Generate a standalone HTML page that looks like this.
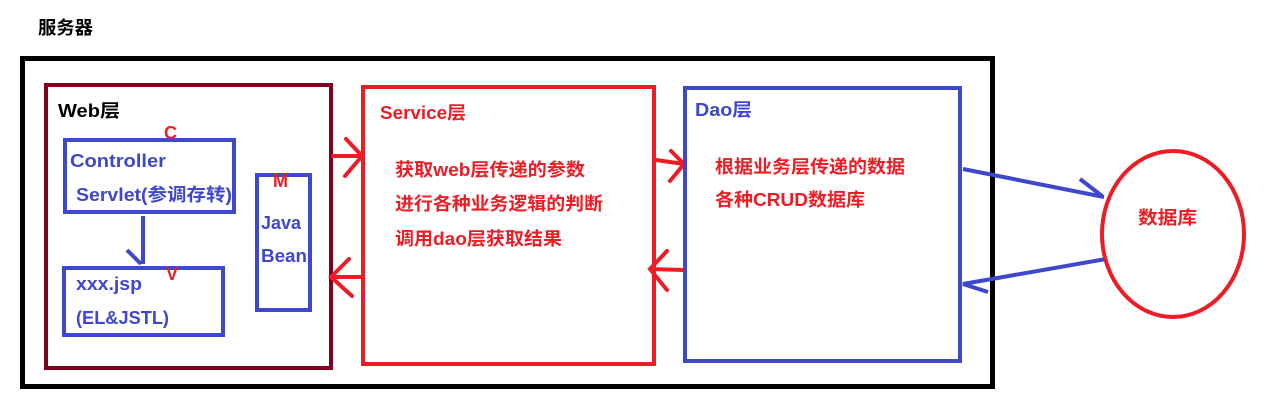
<!DOCTYPE html>
<html><head><meta charset="utf-8"><style>
html,body{margin:0;padding:0;background:#fff;width:1266px;height:414px;overflow:hidden}
svg text{font-family:"Liberation Sans","Noto Sans CJK SC",sans-serif;font-weight:bold;font-size:18px}
</style></head><body>
<svg width="1266" height="414" xmlns="http://www.w3.org/2000/svg">
<text x="38" y="34" fill="#000" font-size="18" textLength="55" lengthAdjust="spacingAndGlyphs">服务器</text>
<rect x="22.5" y="58.5" width="970" height="328" fill="none" stroke="#000" stroke-width="5"/>
<rect x="46" y="85" width="285" height="283" fill="none" stroke="#800020" stroke-width="4"/>
<text x="58" y="117" fill="#000" textLength="62" lengthAdjust="spacingAndGlyphs">Web层</text>
<rect x="65" y="140" width="169" height="72" fill="none" stroke="#3f48cc" stroke-width="4"/>
<text x="70" y="167" fill="#3f48cc" textLength="96" lengthAdjust="spacingAndGlyphs">Controller</text>
<text x="76" y="201" fill="#3f48cc" textLength="156" lengthAdjust="spacingAndGlyphs">Servlet(参调存转)</text>
<text x="164" y="139" fill="#ee1c24">C</text>
<line x1="143" y1="216" x2="143" y2="264" stroke="#3f48cc" stroke-width="4"/>
<line x1="127" y1="250" x2="141" y2="264" stroke="#3f48cc" stroke-width="4"/>
<rect x="64" y="268" width="159" height="67" fill="none" stroke="#3f48cc" stroke-width="4"/>
<text x="76" y="290" fill="#3f48cc" textLength="66" lengthAdjust="spacingAndGlyphs">xxx.jsp</text>
<text x="76" y="324" fill="#3f48cc" textLength="93" lengthAdjust="spacingAndGlyphs">(EL&amp;JSTL)</text>
<text x="166" y="280" fill="#ee1c24">V</text>
<rect x="257" y="175" width="53" height="135" fill="none" stroke="#3f48cc" stroke-width="4"/>
<text x="261" y="229" fill="#3f48cc" textLength="40" lengthAdjust="spacingAndGlyphs">Java</text>
<text x="261" y="262" fill="#3f48cc" textLength="46" lengthAdjust="spacingAndGlyphs">Bean</text>
<text x="273" y="187" fill="#ee1c24">M</text>
<rect x="363" y="87" width="291" height="277" fill="none" stroke="#ee1c24" stroke-width="4"/>
<text x="380" y="119" fill="#ee1c24" textLength="86" lengthAdjust="spacingAndGlyphs">Service层</text>
<text x="395" y="176" fill="#ee1c24" textLength="190" lengthAdjust="spacingAndGlyphs">获取web层传递的参数</text>
<text x="395" y="210" fill="#ee1c24" textLength="208" lengthAdjust="spacingAndGlyphs">进行各种业务逻辑的判断</text>
<text x="395" y="245" fill="#ee1c24" textLength="167" lengthAdjust="spacingAndGlyphs">调用dao层获取结果</text>
<g stroke="#ee1c24" stroke-width="4" fill="none" stroke-linecap="round">
<path d="M333 156 L362 156 M346 139 L362 156 L345 176"/>
<path d="M362 277 L331 277 M349 259 L331 277 L352 296"/>
<path d="M656 160 L684 164 M671 151 L684 164 L670 181"/>
<path d="M683 270 L650 269 M667 251 L650 269 L667 290"/>
</g>
<rect x="685" y="88" width="275" height="273" fill="none" stroke="#3f48cc" stroke-width="4"/>
<text x="695" y="116" fill="#3f48cc" textLength="57" lengthAdjust="spacingAndGlyphs">Dao层</text>
<text x="715" y="173" fill="#ee1c24" textLength="190" lengthAdjust="spacingAndGlyphs">根据业务层传递的数据</text>
<text x="715" y="206" fill="#ee1c24" textLength="150" lengthAdjust="spacingAndGlyphs">各种CRUD数据库</text>
<g stroke="#3f48cc" stroke-width="4" fill="none">
<path d="M963 169 L1104 197 M1080 179 L1102 196"/>
<path d="M1106 259 L963 284 L988 292"/>
</g>
<ellipse cx="1173" cy="234" rx="71" ry="83" fill="none" stroke="#ee1c24" stroke-width="4"/>
<text x="1138" y="224" fill="#ee1c24" textLength="59" lengthAdjust="spacingAndGlyphs">数据库</text>
</svg>
</body></html>
